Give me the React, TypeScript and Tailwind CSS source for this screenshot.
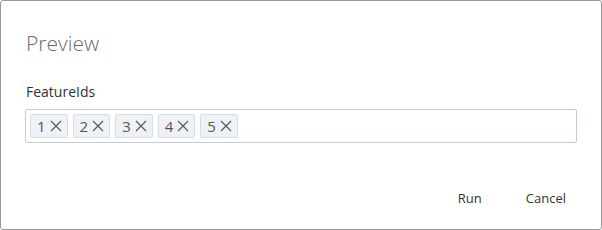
import React from "react";

const XIcon = () => (
  <svg width="12" height="12" viewBox="0 0 12 12" className="ml-[4px]">
    <path d="M1 1L11 11M11 1L1 11" stroke="#555" strokeWidth="1.1" fill="none" />
  </svg>
);

export default function App() {
  const ids = ["1", "2", "3", "4", "5"];
  return (
    <div
      className="w-[602px] h-[230px] bg-white border border-[#9a9a9a] rounded-[3px] flex flex-col"
      style={{ fontFamily: '"Open Sans", "Noto Sans", sans-serif' }}
    >
      <div className="pl-[25px] pt-[26px] text-[21px] font-light text-[#6b6b6b] leading-[32px]">Preview</div>
      <div className="pl-[25px] pt-[23px] text-[14px] text-[#333] leading-[20px]">FeatureIds</div>
      <div className="mx-[24px] mt-[7px] h-[34px] border border-[#c5cad5] rounded-[2px] flex items-center gap-[5px] px-[4px]">
        {ids.map((id) => (
          <div
            key={id}
            className="h-[24px] flex items-center pl-[6px] pr-[5px] bg-[#eef2f6] border border-[#d8dde4] rounded-[2px] text-[15px] text-[#555]"
          >
            <span>{id}</span>
            <XIcon />
          </div>
        ))}
      </div>
      <div className="flex justify-end items-center mt-[41px] pr-[17px] text-[13px] text-[#333] font-medium">
        <button className="px-[14px] h-[30px]">Run</button>
        <button className="ml-[12px] px-[18px] h-[30px]">Cancel</button>
      </div>
    </div>
  );
}
